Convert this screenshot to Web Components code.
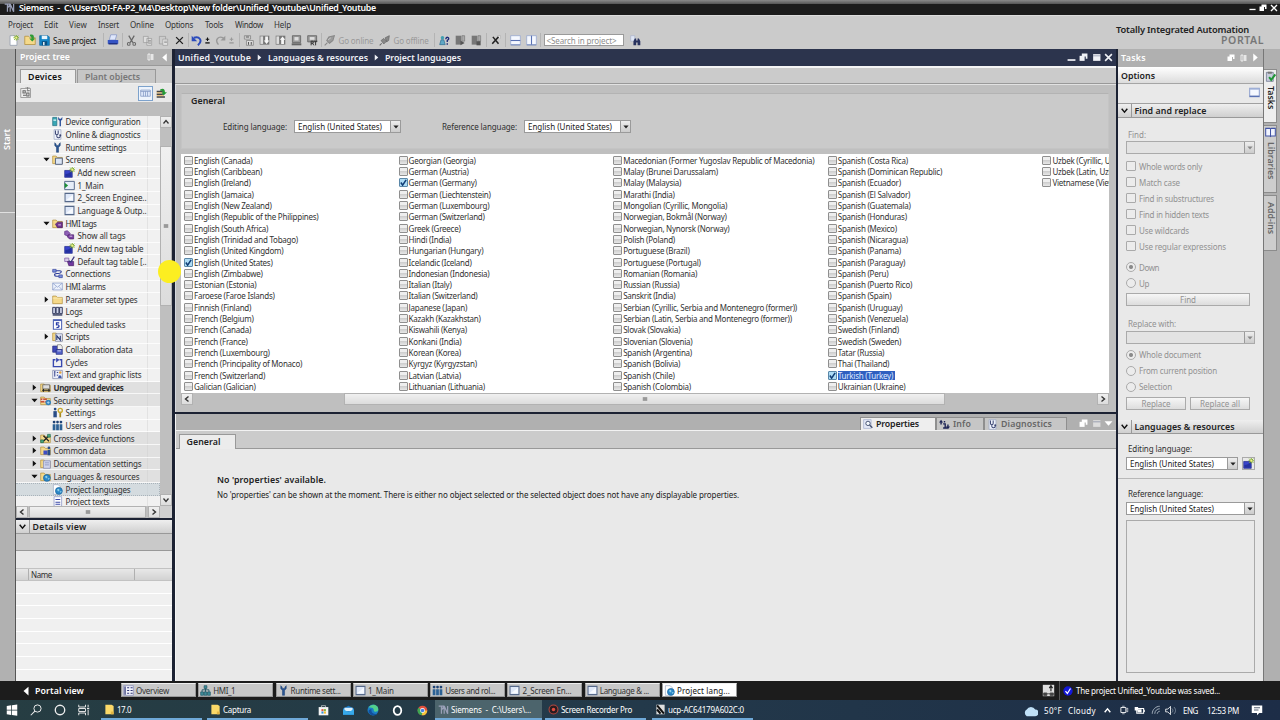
<!DOCTYPE html>
<html lang="en">
<head>
<meta charset="utf-8">
<title>TIA Portal</title>
<style>
  body {
    margin: 0;
    width: 1280px;
    height: 720px;
    overflow: hidden;
    font-family: "Noto Sans", "Open Sans", sans-serif;
    font-size: 8px;
    color: #303030;
    background: #cbcbcb;
  }
</style>
</head>
<body>
<tia-app></tia-app>

<script>
// Small icons, all on a 16x16 grid
const FOLDER = '<path d="M1 3h5l2 2h7v9H1z" fill="#f5d98a" stroke="#b18e3a"/>';
const PAGE = '<path d="M3 1h7l3 3v11H3z" fill="#fff" stroke="#8b94a8"/>';
const WRENCH = '<path d="M4 1v4l2.5 3v7h3V8L12 5V1l-2 2v2H6V3z" fill="#2a5592" stroke="#163a70" stroke-width=".7"/>';
const SPARK = '<path d="M12 0v8M8 4h8M9 1l6 6M15 1l-6 6" stroke="#7fae28" stroke-width="1.4"/><circle cx="12" cy="4" r="1.5" fill="#f3f08a"/>';
const GLOBE = '<circle cx="10" cy="10" r="5" fill="#2b87c8" stroke="#17659c"/><path d="M7 8l3-1 1 2-2 2zM11 11l3-1-1 3z" fill="#8fd0e8"/>';
const ICONS = {
  logo: '<path d="M1 3h8M5 3v11M5 9l4-6M9 14V3l5 11V3" fill="none" stroke="#9aa0b8" stroke-width="1.8"/>',
  newProject: PAGE + SPARK,
  open: FOLDER + '<path d="M8 1c4-1 6 1 5 5h2l-4 4-4-4h3c0-2-1-3-2-3z" fill="#2f9a35"/>',
  save: '<path d="M1 1h12l2 2v12H1z" fill="#1587c9" stroke="#0e649b"/><path d="M4 1h8v5H4z" fill="#e8f5fd"/><path d="M4 9h8v6H4z" fill="#0c4f80"/><path d="M6 10h2v5H6z" fill="#fff"/>',
  print: '<path d="M5 1h8l-2 7H3z" fill="#dfe7fb" stroke="#8596c5"/><path d="M1 8h14v5H1z" fill="#3554c4"/><path d="M2 12h12v2H2z" fill="#1f3186"/>',
  cut: '<path d="M4 1l6 10M12 1L6 11" stroke="#666" stroke-width="1.8"/><circle cx="4" cy="13" r="2" fill="none" stroke="#666" stroke-width="1.5"/><circle cx="12" cy="13" r="2" fill="none" stroke="#666" stroke-width="1.5"/>',
  copy: '<path d="M2 2h7v9H2zM7 5h7v10H7z" fill="#ddd" stroke="#999"/><path d="M9 8h4M9 10h4M9 12h4" stroke="#888"/>',
  paste: '<path d="M2 2h9v11H2z" fill="#ccc" stroke="#999"/><path d="M7 6h7v9H7z" fill="#e6e6e6" stroke="#999"/><path d="M9 9h4M9 11h4" stroke="#888"/>',
  del: '<path d="M2 2l12 12M14 2L2 14" stroke="#222" stroke-width="2.4"/>',
  undo: '<path d="M1 1v8h8z" fill="#2b4bbc"/><path d="M4 4c8-3 14 4 6 11" fill="none" stroke="#2b4bbc" stroke-width="2.8"/>',
  redo: '<path d="M15 1v7H8z" fill="#999"/><path d="M13 5C5 0-1 7 5 14" fill="none" stroke="#999" stroke-width="2"/>',
  more: '<path d="M8 1v8M4 5h8" stroke="currentColor" stroke-width="2.400"/><path d="M3 12h10v3H3z" fill="currentColor"/>',
  compile: '<path d="M2 1h9v5H2zM5 8h10v7H5z" fill="#ddd" stroke="#777"/><path d="M4 3h5M8 10v4M12 10v4" stroke="#555" stroke-width="1.5"/>',
  download: '<path d="M1 1h14v13H1z" fill="#777"/><path d="M2 2h4v11H2z" fill="#ddd"/><path d="M9 2h4v6h2l-4 5-4-5h2z" fill="#f7f7f7"/>',
  upload: '<path d="M1 1h14v13H1z" fill="#777"/><path d="M2 2h4v11H2z" fill="#ddd"/><path d="M9 13h4V7h2l-4-5-4 5h2z" fill="#f7f7f7"/>',
  device: '<path d="M2 1h12v10H2z" fill="#999" stroke="#555"/><path d="M5 3h6v5H5z" fill="#ddd"/><path d="M1 12h14v3H1z" fill="#666"/>',
  rt: '<path d="M1 1h13v9H1z" fill="#999" stroke="#555"/><path d="M4 3h7v4H4z" fill="#ddd"/><path d="M6 15V9h3v3H6M8 12l2 3M10 9h5M12.500 9v6" stroke="#333" stroke-width="1.4" fill="none"/>',
  goOnline: '<path d="M1 15l4-4" stroke="#888" stroke-width="1.500"/><path d="M4 8l3-5 8-2-2 7-5 4z" stroke="#888" fill="#9b9b9b" stroke-width="1.500"/><path d="M6 7l4-3" stroke="#ddd"/>',
  goOffline: '<path d="M1 15l3-3" stroke="#666" stroke-width="1.500"/><path d="M3 8l4-3 4 4-4 4zM9 4l6-3-1 7-3 2z" stroke="#666" fill="#888"/>',
  accessible: '<circle cx="5" cy="4" r="2.500" fill="#3f9fb0"/><path d="M1 14l2-7h4l2 7z" fill="#5fa7c5" stroke="#2d6c8f"/><path d="M10 6c0-4 5-3 4 0l-2 2v2M12 12v2" stroke="#1d2a78" stroke-width="2" fill="none"/>',
  start: '<path d="M1 1h8v13H1z" fill="#777"/><path d="M10 1h4v8h-4z" fill="#aaa" stroke="#777"/><path d="M8 8l6 3.500L8 15z" fill="#555"/>',
  stop: '<path d="M1 1h8v13H1z" fill="#777"/><path d="M10 1h4v8h-4z" fill="#aaa" stroke="#777"/><path d="M8 9h6v6H8z" fill="#555"/>',
  cross: '<path d="M10 1h5v5" fill="#eee" stroke="#aaa"/><path d="M3 3l9 11M12 3L2 14" stroke="#222" stroke-width="2.4"/>',
  splitH: '<path d="M1 1h14v13H1z" fill="#f5f8ff" stroke="#8ea0cd"/><path d="M1 8h14" stroke="#5971b3" stroke-width="1.6"/><path d="M1 14.500h14" stroke="#5971b3"/>',
  splitV: '<path d="M1 1h14v13H1z" fill="#f5f8ff" stroke="#8ea0cd"/><path d="M8 1v13" stroke="#5971b3" stroke-width="1.6"/><path d="M1 14.500h14" stroke="#5971b3"/>',
  window: '<path d="M1 2h14v12H1z" fill="#f5f8ff" stroke="#8ea0cd" stroke-width="1.500"/><path d="M1 13.500h14" stroke="#5971b3" stroke-width="2"/><path d="M1 3h14" stroke="#a9b8dc" stroke-width="2"/>',
  find: '<path d="M1 1h6v8H1z" fill="#dfe6f5" stroke="#a9b3cc"/><path d="M5 15V9l2-4h2v3h2V5h2l2 4v6h-4v-4H9v4z" fill="#27315f"/>',
  min: '<path d="M1 11h14v3H1z" fill="currentColor"/>',
  restore: '<path d="M5 1h10v9h-3V6H5z" fill="currentColor"/><path d="M1 5h9v9H1z" fill="currentColor"/>',
  max: '<path d="M2 2h13v12H2z" fill="currentColor"/><path d="M2 5h13" stroke="#66708c"/>',
  close: '<path d="M2 2l12 12M14 2L2 14" stroke="currentColor" stroke-width="2.800"/>',
  pin: '<path d="M2 2h4v12H2z" fill="none" stroke="currentColor" stroke-width="1.5"/><path d="M8 2h5v12H8z" fill="currentColor" opacity=".7"/>',
  left: '<path d="M12 1v14L4 8z" fill="currentColor"/>',
  right: '<path d="M4 1v14l8-7z" fill="currentColor"/>',
  down: '<path d="M1 4h14l-7 8z" fill="currentColor"/>',
  chevDown: '<path d="M3 5l5 6 5-6" fill="none" stroke="currentColor" stroke-width="2.500"/>',
  chevUp: '<path d="M3 11l5-6 5 6" fill="none" stroke="currentColor" stroke-width="2.500"/>',
  chevLeft: '<path d="M11 3L5 8l6 5" fill="none" stroke="currentColor" stroke-width="2.800"/>',
  chevRight: '<path d="M5 3l6 5-6 5" fill="none" stroke="currentColor" stroke-width="2.800"/>',
  grip: '<path d="M2 3h12v10H2z" fill="#999"/>',
  network: '<path d="M1 2h13v12H1z" fill="#eee" stroke="#888"/><path d="M4 5h3v3H4zM9 5h4M9 8h3v4H9zM4 11h4" fill="none" stroke="#666" stroke-width="1.4"/><path d="M7 0h6M10 0v4" stroke="#777"/>',
  grid: '<path d="M1 3h14v9H1z" fill="#dfe9fb" stroke="#7990be"/><path d="M1 5h14M5 5v7M8 5v7M11 5v7" stroke="#7990be"/>',
  exportIcon: '<path d="M1 5h9M1 9h9M1 13h12" stroke="#444" stroke-width="2.300"/><path d="M1 7h8M1 11h10" stroke="#e8a63a"/><path d="M6 2c5-2 7 0 7 4h3l-5 5-3-5h2c0-2-2-2-4-2z" fill="#259a35"/>',
  devconf: '<path d="M1 2h6v12H1z" fill="#39a7b5" stroke="#216e80"/><path d="M2 5h4v2H2z" fill="#d5f3f5"/><path d="M9 1v4l2 2v8h2V7l2-2V1l-2 3h-2z" fill="#2a4f9a"/>',
  diag: '<path d="M3 1h10v14H3z" fill="#eef2fb" stroke="#9ba7c4"/><path d="M5 2v4c0 3 4 3 4 0V2M7 8v2c0 4 5 3 5 0" fill="none" stroke="#3a4472" stroke-width="1.5"/><circle cx="12" cy="9" r="1.500" fill="#3a4472"/>',
  wrench: WRENCH,
  screens: FOLDER + '<path d="M5 6h10v9H5z" fill="#dce6f5" stroke="#53627f" stroke-width="1.4"/>',
  addNew: '<path d="M1 5h11v10H1z" fill="#3843c9" stroke="#222a8a"/><path d="M2 10c4 0 6-2 9-4v8H2z" fill="#2431a0"/>' + SPARK,
  screenStart: '<path d="M1 2h14v12H1z" fill="#e6edf8" stroke="#56698a" stroke-width="1.400"/><path d="M1 4l5 4-5 4z" fill="#1b8f32"/>',
  screen: '<path d="M1.500 2h13v12h-13z" fill="#dfe8f8" stroke="#56698a" stroke-width="1.500"/><path d="M3 12l10-8v8z" fill="#f7faff"/>',
  tagFolder: FOLDER + '<path d="M5 9l3-3h7v8H8z" fill="#70328f" stroke="#4b2067"/><path d="M9 10h4" stroke="#fff"/>',
  tags: '<path d="M1 2l4-1 4 4-3 4-5-2z" fill="#8e5fb5" stroke="#592a83"/><path d="M6 7h8v6H8l-3-3z" fill="#7b3fa4" stroke="#4c2169"/><path d="M8 9h4" stroke="#fff"/>',
  tagTable: '<path d="M1 3h6v5H1z" fill="#d8c9e8" stroke="#7853a0"/><path d="M5 8h9v6H7z" fill="#7138a0" stroke="#4c2169"/><path d="M7 7l3 2 5-8" fill="none" stroke="#3b3580" stroke-width="1.800"/>',
  conn: '<path d="M1 2h5v4H1zM10 10h5v4h-5z" fill="#7c8fd8" stroke="#3445a0"/><path d="M6 4h5c4 0 3 4-2 4H7c-5 0-4 4 0 4h3" fill="none" stroke="#2e3e9a" stroke-width="1.600"/>',
  mail: '<path d="M1 3h14v10H1z" fill="#eef3fc" stroke="#8498c8"/><path d="M1 3l7 6 7-6M1 13l5-5M15 13l-5-5" fill="none" stroke="#8498c8"/>',
  folder: FOLDER + '<path d="M1 6h14" stroke="#fff1bd"/>',
  logs: '<path d="M1 2h4v9H1zM6 2h4v9H6zM11 2h4v9h-4z" fill="#cdd3e8" stroke="#2b3358" stroke-width="1.3"/><path d="M1 13h14" stroke="#2b3358" stroke-width="2"/>',
  task: '<path d="M2 1h12v14H2z" fill="#fff" stroke="#4a60b4" stroke-width="1.5"/><path d="M2 2h12" stroke="#4a60b4" stroke-width="2"/><path d="M10.500 5.500H6.500v3c5-1 5 4 0 4" fill="none" stroke="#2439a5" stroke-width="1.800"/>',
  scripts: FOLDER + '<path d="M5 4h10v11H5z" fill="#e8ecf8" stroke="#6f7b9c"/><path d="M7 13V7l5 6V7" stroke="#26366f" stroke-width="1.6" fill="none"/>',
  collab: '<path d="M1 3h8v9H1z" fill="#3f48b8" stroke="#242b7d"/><path d="M8 1h5l2 3v4H8z" fill="#eee" stroke="#777"/><path d="M6 8h9v7H6z" fill="#5463c9" stroke="#242b7d"/><path d="M8 10h5" stroke="#fff"/>',
  cycles: '<path d="M5 4H2v10h12V4h-3" fill="none" stroke="#3949b0" stroke-width="2"/><path d="M6 1l5 3-5 4z" fill="#3949b0"/>',
  textList: '<path d="M1 2h14v12H1z" fill="#eceffa" stroke="#7780a8"/><path d="M4 4v7M3 4h2M7 5h2M7 9h2" stroke="#2e3a85" stroke-width="1.400"/><circle cx="12" cy="5" r="1.800" fill="#e3a23a"/><path d="M9 13c0-5 5-5 5 0z" fill="#3e58a8"/>',
  ungrouped: FOLDER + '<path d="M4 4h10v6H4z" fill="#ddd" stroke="#555"/><path d="M3 12h12M5 10v4M13 10v4" stroke="#222" stroke-width="1.600"/>',
  security: FOLDER + '<path d="M1 5h9v6H1z" fill="#c5503a"/><path d="M1 8h9M4 5v3M7 8v3" stroke="#fff"/><circle cx="12" cy="11" r="4" fill="#3382bd"/><path d="M10 11h4M12 9v4" stroke="#bde3f5"/>',
  userSet: '<circle cx="4.500" cy="3" r="2" fill="#294c86"/><path d="M2 6h5v9H2z" fill="#294c86"/><path d="M12 7v8" stroke="#a88a22" stroke-width="2.500"/><circle cx="12" cy="5" r="3" fill="none" stroke="#c9a92e" stroke-width="2"/>',
  users: '<circle cx="3" cy="3" r="2" fill="#1d4275"/><circle cx="8" cy="3" r="2" fill="#1d4275"/><circle cx="13" cy="3" r="2" fill="#1d4275"/><path d="M1 6h4v9H1zM6 6h4v9H6zM11 6h4v9h-4z" fill="#2c6194"/>',
  cross2: FOLDER + '<path d="M5 4l8 8M13 4l-8 8" stroke="#222" stroke-width="1.800"/><path d="M1 10h4v4H1zM11 2h4v4h-4z" fill="#4aa882" stroke="#206a4c"/>',
  common: FOLDER + '<path d="M5 8h6v6H5z" fill="#3d4dc4"/><circle cx="13" cy="4" r="2" fill="#294c86"/><path d="M11 7h4v8h-4z" fill="#294c86"/>',
  docset: FOLDER + '<path d="M5 4h10v11H5z" fill="#cfd4ec" stroke="#7d86b5"/><path d="M7 7h6M7 10h6" stroke="#7d86b5"/>',
  langFolder: FOLDER + GLOBE,
  lang: '<path d="M2 1h7l3 3v11H2z" fill="#fff" stroke="#9aa7c0"/>' + GLOBE,
  text: '<path d="M3 1h11v14H3z" fill="#fff" stroke="#7f8bc2"/><path d="M5 5h7M5 9h7M5 12h7" stroke="#3b4aa8" stroke-width="1.5"/>',
  magnify: '<path d="M1 1h12v14H1z" fill="#e3e8f6" stroke="#9aa6c8"/><circle cx="8" cy="7" r="3.500" fill="#f6fbff" stroke="#43506f" stroke-width="1.5"/><path d="M10.500 9.500L15 14" stroke="#43506f" stroke-width="2"/>',
  info: '<path d="M0 5l3-4 3 4H4v3H2V5zM10 11l3 4 3-4h-2V8h-2v3z" fill="#1c2354"/><path d="M6 7h3v6M6 13h6M8 3v2" stroke="#1c2354" stroke-width="2"/>',
  taskCheck: '<path d="M2 2h10v13H2z" fill="#c8cddd" stroke="#626b85"/><path d="M4 1h6v3H4z" fill="#777"/><path d="M6 9l3 4 6-8" fill="none" stroke="#1f9636" stroke-width="2.800"/>',
  book: '<path d="M1 2h6l1 1 1-1h6v11H9l-1 1-1-1H1z" fill="#f1f4ff" stroke="#4254a5" stroke-width="1.500"/><path d="M8 3v11" stroke="#4254a5" stroke-width="1.500"/>',
  overview: '<path d="M1 1h14v14H1z" fill="#f2f3fb" stroke="#8188b5"/><path d="M3 2v12M6 4h3M11 4h3M6 8h3M11 8h3M6 12h3M11 12h3" stroke="#2e3573" stroke-width="1.800"/>',
  hmi: '<path d="M6 1h4v4H6zM1 10h4v5H1zM6 10h4v5H6zM11 10h4v5h-4z" fill="#3e8d99" stroke="#1e5665"/><path d="M8 5v5M3 10V7h10v3" fill="none" stroke="#1e5665" stroke-width="1.300"/>',
  status: '<path d="M1 1h14v14H1z" fill="#ddd"/><path d="M2 11h4v3H2zM10 11h4v3h-4zM6 12h4" fill="#444" stroke="#444"/><path d="M11 2v7M9 5l2-3 2 3" stroke="#222" stroke-width="1.400" fill="none"/>',
  ok: '<circle cx="8" cy="8" r="7.500" fill="#1418d8"/><path d="M4 8l3 4 5-8" fill="none" stroke="#fff" stroke-width="2"/>',
  win: '<path d="M1 2.500l6-.8v6H1zM8 1.500L15 .6v7.100H8zM1 8.600h6v6l-6-.8zM8 8.600h7v7l-7-.9z" fill="#fff"/>',
  search: '<circle cx="10" cy="6" r="4.800" fill="none" stroke="#eee" stroke-width="1.300"/><path d="M6.500 9.500L1 15" stroke="#eee" stroke-width="1.400"/>',
  cortana: '<circle cx="8" cy="8" r="6.300" fill="none" stroke="#eee" stroke-width="1.800"/>',
  taskview: '<path d="M1 1v3h9V1M1 15v-3h9v3M1 6h9v4H1zM13.500 1v3M13.500 8v7" fill="none" stroke="#e6e6e6" stroke-width="1.300"/><path d="M12 5h3v2h-3z" fill="#e6e6e6"/>',
  winFolder: '<path d="M2 1h9l3 2v12H2z" fill="#fbd968"/><path d="M10 11h4v4h-4z" fill="#e3b544"/>',
  store: '<path d="M1 3h14v12H1z" fill="#f4f4f4"/><path d="M5 3V1h6v2" fill="none" stroke="#ddd"/><path d="M5 6h3v3H5z" fill="#e5533c"/><path d="M8.500 6h3v3h-3z" fill="#7bb83c"/><path d="M5 9.500h3v3H5z" fill="#2f93dd"/><path d="M8.500 9.500h3v3h-3z" fill="#f4b92c"/>',
  winMail: '<path d="M0 5l8-4 8 4v9H0z" fill="#1476c4"/><path d="M2 4h12v5H2z" fill="#d9effc"/><path d="M0 6l8 4 8-4v8H0z" fill="#37a9ea"/>',
  edge: '<circle cx="8" cy="8" r="7.300" fill="#1b7ec6"/><path d="M2 5c3-6 13-5 13 2 0 4-5 4-6 2 1-4-4-5-7-4z" fill="#51cf8c"/><path d="M6 7c-1 6 4 7 8 6-4 4-12 2-12-4 1-2 3-2 4-2z" fill="#12509d"/>',
  opera: '<ellipse cx="8" cy="8" rx="5.500" ry="6.300" fill="none" stroke="#fff" stroke-width="2.600"/>',
  chrome: '<circle cx="8" cy="8" r="7" fill="#e0503e"/><path d="M8 8L2 4a7 7 0 0 0 5 11z" fill="#3ea653"/><path d="M8 8h7a7 7 0 0 1-8 7z" fill="#f4c63c"/><circle cx="8" cy="8" r="3.500" fill="#fff"/><circle cx="8" cy="8" r="2.600" fill="#447fe0"/>',
  rec: '<circle cx="8" cy="8" r="6.500" fill="#2a1c20" stroke="#b5483f" stroke-width="1.500"/><circle cx="8" cy="8" r="2.500" fill="#df4c3f"/>',
  ucp: '<path d="M2 1h12v14H2z" fill="#ddd"/><path d="M3 2l10 12M3 8l5 6" stroke="#111" stroke-width="3"/>',
  cloud: '<path d="M4 14a4 4 0 0 1 0-7 5 5 0 0 1 9 0 3.500 3.500 0 0 1 0 7z" fill="#bfe0f7"/>',
  cam: '<path d="M3 4h8v8H3z" fill="none" stroke="#fff" stroke-width="1.400"/><path d="M11 7l3-2v6l-3-2M5 2h4M5 14h4" stroke="#fff" fill="none"/>',
  battery: '<path d="M4 5h10v7H4zM15 7v3" fill="none" stroke="#fff" stroke-width="1.500"/><path d="M5 6h6v5H5zM1 3h5v5H1z" fill="#fff"/>',
  wifi: '<path d="M2 14C2 7 8 2 14 2M6 14c0-5 4-8 8-8M10 14c0-2 2-4 4-4" fill="none" stroke="#bcc6d0" stroke-width="1.300"/>',
  sound: '<path d="M1 6h3l4-4v12l-4-4H1z" fill="none" stroke="#fff" stroke-width="1.200"/><path d="M10 5c2 2 2 4 0 6M13 3c3 3 3 7 0 10" fill="none" stroke="#8b98a8" stroke-width="1.200"/>',
  notify: '<path d="M1 2h14v10h-4l-3 3v-3H1z" fill="#fff"/><path d="M4 5h8M4 8h6" stroke="#1f2f45"/>'
};

class TiaElement extends HTMLElement {
  connectedCallback() {
    if (this.shadowRoot) return;
    this.attachShadow({ mode: 'open' });
    this.shadowRoot.innerHTML = `<style>* { box-sizing: border-box; } ${this.css()}</style>${this.html()}`;
    this.ready();
  }

  css() { return ''; }
  html() { return '<slot></slot>'; }
  ready() {}
}

const icon = (name, size = 11, color = '') =>
  `<tia-icon name="${name}" size="${size}"${color ? ` style="color:${color}"` : ''}></tia-icon>`;
const fit = (text, width, style = '') =>
  `<fit-text w="${width}" style="${style}">${text.replace(/&/g, '&amp;').replace(/</g, '&lt;')}</fit-text>`;
const gap = (width) => `<i style="flex:none;width:${width}px"></i>`;

class TiaIcon extends TiaElement {
  css() {
    const size = this.getAttribute('size');
    return `:host { display: block; flex: none; width: ${size}px; height: ${size}px; } svg { display: block; }`;
  }

  html() {
    const size = this.getAttribute('size');
    return `<svg width="${size}" height="${size}" viewBox="0 0 16 16" fill="none">${ICONS[this.getAttribute('name')]}</svg>`;
  }
}
customElements.define('tia-icon', TiaIcon);

// Single line label that tracks its letters to fill the given width
class FitText extends TiaElement {
  css() {
    return `:host { display: block; flex: none; white-space: pre; width: ${this.getAttribute('w')}px; } span { display: inline-block; }`;
  }

  html() { return `<span><slot></slot></span>`; }

  ready() {
    const span = this.shadowRoot.querySelector('span');
    const width = span.getBoundingClientRect().width;
    if (!width) return;
    const spacing = (Number(this.getAttribute('w')) - width) / this.textContent.length;
    span.style.letterSpacing = `${spacing.toFixed(3)}px`;
  }
}
customElements.define('fit-text', FitText);

class TitleBar extends TiaElement {
  css() {
    return `
      :host { display: flex; align-items: center; height: 15px; padding: 0 2px 0 4px; color: #fff;
        background: linear-gradient(#8a8a8a, #555 4px, #1c1c1c 4px); font-size: 8.800px; font-weight: 600; box-sizing: border-box; }
    `;
  }

  html() {
    return `${icon('logo', 11)}${gap(4)}${fit('Siemens  -  C:\\Users\\DI-FA-P2_M4\\Desktop\\New folder\\Unified_Youtube\\Unified_Youtube', 357)}
      <i style="flex:1"></i>${icon('min', 7)}${gap(3)}${icon('restore', 8)}${gap(3)}${icon('close', 8)}`;
  }
}
customElements.define('title-bar', TitleBar);

class AppHeader extends TiaElement {
  css() {
    return `
      :host { display: flex; justify-content: space-between; height: 34px; background: #cbcbcb; border-top: 1px solid #ddd; box-sizing: border-box; }
      .menu, .tools { display: flex; align-items: center; }
      .menu { height: 16px; padding-left: 8px; color: #333; }
      .tools { height: 16px; padding-left: 8px; }
      .sep { flex: none; width: 1px; height: 14px; background: #b4b4b4; }
      .search { display: flex; align-items: center; width: 80px; height: 12px; background: #fff; border: 1px solid #9a9a9a; padding-left: 2px; color: #8d8d8d; }
      .brand { display: flex; flex-direction: column; align-items: flex-end; padding: 9px 16px 0 0; font-weight: 600; }
      .brand fit-text { line-height: 10px; }
    `;
  }

  html() {
    const sep = '<b class="sep"></b>';
    return `
      <div>
        <div class="menu">
          ${fit('Project', 25)}${gap(11)}${fit('Edit', 14)}${gap(11)}${fit('View', 18)}${gap(11)}${fit('Insert', 21)}${gap(11)}
          ${fit('Online', 24)}${gap(11)}${fit('Options', 28)}${gap(12)}${fit('Tools', 18)}${gap(12)}${fit('Window', 28)}${gap(11)}${fit('Help', 17)}
        </div>
        <div class="tools">
          ${icon('newProject')}${gap(4.500)}${icon('open', 12)}${gap(3.500)}${icon('save')}${gap(3)}${fit('Save project', 43, 'color:#111')}
          ${gap(7)}${sep}${gap(3)}${icon('print', 12)}${gap(3)}${sep}${gap(3)}
          ${icon('cut')}${gap(5)}${icon('copy')}${gap(5)}${icon('paste')}${gap(6)}${icon('del', 9)}${gap(4)}${sep}${gap(2)}
          ${icon('undo', 11)}${gap(2)}${icon('more', 7, '#111')}${gap(4)}${icon('redo')}${gap(2)}${icon('more', 7, '#999')}${gap(3.500)}${sep}${gap(3)}
          ${icon('compile')}${gap(5)}${icon('download')}${gap(5)}${icon('upload')}${gap(5)}${icon('device')}${gap(5)}${icon('rt')}${gap(3)}${sep}${gap(2)}
          ${icon('goOnline')}${gap(4)}${fit('Go online', 35, 'color:#999')}${gap(5)}${icon('goOffline')}${gap(4)}${fit('Go offline', 35, 'color:#999')}
          ${gap(5)}${sep}${gap(4)}${icon('accessible')}${gap(5)}${icon('start')}${gap(5)}${icon('stop')}${gap(4)}${sep}${gap(4)}
          ${icon('cross', 10)}${gap(4)}${sep}${gap(4)}${icon('splitH')}${gap(5)}${icon('splitV')}${gap(3)}${sep}${gap(3)}
          <div class="search">${fit('<Search in project>', 70)}</div>${gap(6)}${icon('find')}
        </div>
      </div>
      <div class="brand">
        <div style="padding-right:15px">${fit('Totally Integrated Automation', 133, 'font-size:9.3px;color:#222')}</div>
        ${fit('PORTAL', 43, 'font-size:10.5px;color:#777')}
      </div>`;
  }
}
customElements.define('app-header', AppHeader);

class ScrollBar extends TiaElement {
  css() {
    const vertical = this.hasAttribute('vertical');
    return `
      :host { display: flex; flex-direction: ${vertical ? 'column' : 'row'}; flex: none; background: #bfbfbf; color: #333;
        ${vertical ? 'width: 12px' : 'height: 12px'}; }
      .btn, .thumb { display: flex; align-items: center; justify-content: center; flex: none; border: 1px solid #b2b2b2; background: linear-gradient(#f0f0f0, #dcdcdc); }
      .btn { width: 12px; height: 12px; }
    `;
  }

  html() {
    const vertical = this.hasAttribute('vertical');
    const side = vertical ? 'height' : 'width';
    return `<div class="btn">${icon(vertical ? 'chevUp' : 'chevLeft', 8)}</div>
      <i style="flex:none;${side}:${this.getAttribute('start')}px"></i>
      <div class="thumb" style="${side}:${this.getAttribute('thumb')}px">${icon('grip', 6)}</div>
      <i style="flex:1"></i><div class="btn">${icon(vertical ? 'chevDown' : 'chevRight', 8)}</div>`;
  }
}
customElements.define('scroll-bar', ScrollBar);

// level, arrow, icon, text, width
const TREE = [
  [2, '', 'devconf', 'Device configuration', 75],
  [2, '', 'diag', 'Online & diagnostics', 75],
  [2, '', 'wrench', 'Runtime settings', 61],
  [2, 'down', 'screens', 'Screens', 29],
  [3, '', 'addNew', 'Add new screen', 58],
  [3, '', 'screenStart', '1_Main', 26],
  [3, '', 'screen', '2_Screen Enginee..', 69],
  [3, '', 'screen', 'Language & Outp..', 69],
  [2, 'down', 'tagFolder', 'HMI tags', 31],
  [3, '', 'tags', 'Show all tags', 48],
  [3, '', 'addNew', 'Add new tag table', 66],
  [3, '', 'tagTable', 'Default tag table [..', 69],
  [2, '', 'conn', 'Connections', 45],
  [2, '', 'mail', 'HMI alarms', 40],
  [2, 'right', 'folder', 'Parameter set types', 72],
  [2, '', 'logs', 'Logs', 17],
  [2, '', 'task', 'Scheduled tasks', 60],
  [2, 'right', 'scripts', 'Scripts', 24],
  [2, '', 'collab', 'Collaboration data', 67],
  [2, '', 'cycles', 'Cycles', 22],
  [2, '', 'textList', 'Text and graphic lists', 76],
  [1, 'right', 'ungrouped', 'Ungrouped devices', 70],
  [1, 'down', 'security', 'Security settings', 60],
  [2, '', 'userSet', 'Settings', 30],
  [2, '', 'users', 'Users and roles', 56],
  [1, 'right', 'cross2', 'Cross-device functions', 81],
  [1, 'right', 'common', 'Common data', 52],
  [1, 'right', 'docset', 'Documentation settings', 88],
  [1, 'down', 'langFolder', 'Languages & resources', 86],
  [2, '', 'lang', 'Project languages', 65],
  [2, '', 'text', 'Project texts', 44]
];

class TreeView extends TiaElement {
  css() {
    return `
      :host { display: grid; grid-template-columns: 1fr 12px; grid-template-rows: 390px 12px; background: #d0d0d0; }
      .rows { overflow: hidden; background: linear-gradient(90deg, transparent 131px, #e2e2e2 131px, #e2e2e2 132px, transparent 132px) #f1f1f1; }
      .row { display: flex; align-items: center; height: 12.667px; border-bottom: 1px solid rgba(255, 255, 255, .75); line-height: 11px; }
      .l1 { padding-left: 14px; background: rgba(205, 205, 205, .45); }
      .l2 { padding-left: 26px; }
      .l3 { padding-left: 38px; }
      .arrow { width: 10px; padding-left: 1px; color: #111; }
      .sel { background: rgba(196, 207, 214, .65); border: 1px dotted #a9b3ba; border-left: 0; }
      .bold { font-weight: 700; }
    `;
  }

  html() {
    const rows = TREE.map(([level, arrow, name, text, width]) => {
      const cls = text === 'Project languages' ? ' sel' : text === 'Ungrouped devices' ? ' bold' : '';
      return `<div class="row l${level}${cls}"><div class="arrow">${arrow ? icon(arrow, 7) : ''}</div>
        ${icon(name, 11)}${gap(2.500)}${fit(text, width)}</div>`;
    }).join('');
    return `<div class="rows">${rows}</div><scroll-bar vertical start="18" thumb="160"></scroll-bar>
      <scroll-bar start="1" thumb="117"></scroll-bar>`;
  }
}
customElements.define('tree-view', TreeView);

class SectionHeader extends TiaElement {
  css() {
    return `
      :host { display: flex; align-items: center; flex: none; box-sizing: border-box; height: 14px; border-bottom: 1px solid #999; background: linear-gradient(#efefef, #cfcfcf); font-size: 8.800px; font-weight: 600; color: #222; }
      div { display: flex; align-items: center; justify-content: center; width: 14px; height: 100%; border-right: 1px solid #999; margin-right: 2.500px; }
    `;
  }

  html() { return `<div>${icon('chevDown', 9, '#111')}</div><slot></slot>`; }
}
customElements.define('section-header', SectionHeader);

class ProjectTree extends TiaElement {
  css() {
    return `
      :host { display: flex; flex-direction: column; background: #bdbdbd; overflow: hidden; }
      .head, .tabs, .tools, .name { display: flex; align-items: center; flex: none; }
      .head { height: 17px; padding: 0 3px 0 4px; background: #b0b0b0; color: #fff; font-weight: 600; font-size: 8.800px; border-bottom: 1px solid #999; }
      .tabs { height: 18px; align-items: flex-end; padding-left: 4px; background: #cbcbcb; font-size: 8.800px; font-weight: 600; border-bottom: 1px solid #eee; }
      .tab { display: flex; align-items: center; justify-content: center; height: 14px; border: 1px solid #999; border-bottom: 0; }
      .on { width: 56px; padding-right: 6px; background: #ececec; }
      .off { width: 79px; padding-right: 8px; background: #c6c6c6; }
      .tools { height: 18px; padding: 0 5px 0 4px; background: #e9e9e9; }
      .grid { border: 1px solid #7da2cc; background: #eef4fd; padding: 1px; margin-right: 3px; }
      tree-view { margin-top: 14px; flex: none; }
      .gap { flex: none; height: 2px; background: #1c2233; }
      .bar { flex: none; height: 17px; background: #c9c9c9; border-bottom: 1px solid #999; }
      .blank { flex: none; height: 17px; background: #e9e9e9; }
      .name { height: 13px; background: linear-gradient(#e8e8e8, #d2d2d2); border: 1px solid #c2c2c2; border-width: 1px 0; }
      .name div { display: flex; align-items: center; height: 100%; border-right: 1px solid #b0b0b0; }
      .lines { flex: 1; background: repeating-linear-gradient(#f0f0f0 0 11.600px, #fff 11.600px 12.667px); }
    `;
  }

  html() {
    return `
      <div class="head">${fit('Project tree', 50)}<i style="flex:1"></i>${icon('pin', 8)}${gap(5)}${icon('left', 9)}</div>
      <div class="tabs">
        <div class="tab on">${fit('Devices', 34, 'color:#111')}</div>${gap(1)}
        <div class="tab off">${fit('Plant objects', 55, 'color:#777')}</div>
      </div>
      <div class="tools">${icon('network', 12)}<i style="flex:1"></i><div class="grid">${icon('grid', 11)}</div>${icon('exportIcon', 11)}</div>
      <tree-view></tree-view>
      <div class="gap"></div>
      <section-header>${fit('Details view', 54)}</section-header>
      <div class="bar"></div><div class="blank"></div>
      <div class="name"><div style="width:13px"></div><div style="width:106px;padding-left:2px">${fit('Name', 21)}</div></div>
      <div class="lines"></div>`;
  }
}
customElements.define('project-tree', ProjectTree);

class SelectBox extends TiaElement {
  css() {
    return `
      :host { display: flex; justify-content: space-between; align-items: center; height: 13px; border: 1px solid #9a9a9a; background: #fff; padding-left: 3px; box-sizing: border-box; color: #222; line-height: 10px; }
      :host([disabled]) { background: #e3e3e3; color: #888; border-color: #aaa; }
      .btn { display: flex; align-items: center; justify-content: center; width: 10px; height: 100%; border-left: 1px solid #9a9a9a; background: linear-gradient(#eee, #ccc); }
    `;
  }

  html() { return `<slot></slot><i></i><div class="btn">${icon('down', 6)}</div>`; }
}
customElements.define('select-box', SelectBox);

const LANGS = [
  ['English (Canada)', 'English (Caribbean)', 'English (Ireland)', 'English (Jamaica)', 'English (New Zealand)', 'English (Republic of the Philippines)', 'English (South Africa)', 'English (Trinidad and Tobago)', 'English (United Kingdom)', '*English (United States)', 'English (Zimbabwe)', 'Estonian (Estonia)', 'Faroese (Faroe Islands)', 'Finnish (Finland)', 'French (Belgium)', 'French (Canada)', 'French (France)', 'French (Luxembourg)', 'French (Principality of Monaco)', 'French (Switzerland)', 'Galician (Galician)'],
  ['Georgian (Georgia)', 'German (Austria)', '*German (Germany)', 'German (Liechtenstein)', 'German (Luxembourg)', 'German (Switzerland)', 'Greek (Greece)', 'Hindi (India)', 'Hungarian (Hungary)', 'Icelandic (Iceland)', 'Indonesian (Indonesia)', 'Italian (Italy)', 'Italian (Switzerland)', 'Japanese (Japan)', 'Kazakh (Kazakhstan)', 'Kiswahili (Kenya)', 'Konkani (India)', 'Korean (Korea)', 'Kyrgyz (Kyrgyzstan)', 'Latvian (Latvia)', 'Lithuanian (Lithuania)'],
  ['Macedonian (Former Yugoslav Republic of Macedonia)', 'Malay (Brunei Darussalam)', 'Malay (Malaysia)', 'Marathi (India)', 'Mongolian (Cyrillic, Mongolia)', 'Norwegian, Bokmål (Norway)', 'Norwegian, Nynorsk (Norway)', 'Polish (Poland)', 'Portuguese (Brazil)', 'Portuguese (Portugal)', 'Romanian (Romania)', 'Russian (Russia)', 'Sanskrit (India)', 'Serbian (Cyrillic, Serbia and Montenegro (former))', 'Serbian (Latin, Serbia and Montenegro (former))', 'Slovak (Slovakia)', 'Slovenian (Slovenia)', 'Spanish (Argentina)', 'Spanish (Bolivia)', 'Spanish (Chile)', 'Spanish (Colombia)'],
  ['Spanish (Costa Rica)', 'Spanish (Dominican Republic)', 'Spanish (Ecuador)', 'Spanish (El Salvador)', 'Spanish (Guatemala)', 'Spanish (Honduras)', 'Spanish (Mexico)', 'Spanish (Nicaragua)', 'Spanish (Panama)', 'Spanish (Paraguay)', 'Spanish (Peru)', 'Spanish (Puerto Rico)', 'Spanish (Spain)', 'Spanish (Uruguay)', 'Spanish (Venezuela)', 'Swedish (Finland)', 'Swedish (Sweden)', 'Tatar (Russia)', 'Thai (Thailand)', '*Turkish (Turkey)', 'Ukrainian (Ukraine)'],
  ['Uzbek (Cyrillic, Uzbekistan)', 'Uzbek (Latin, Uzbekistan)', 'Vietnamese (Vietnam)']
];

class LanguageList extends TiaElement {
  css() {
    return `
      :host { display: flex; height: 239px; padding: .4px 0 0 3px; background: #fff; overflow: hidden; box-sizing: border-box; }
      .col { flex: none; width: 214.600px; }
      .row { display: flex; align-items: center; height: 11.330px; white-space: nowrap; letter-spacing: -.25px; line-height: 9px; color: #333; }
      .box { flex: none; width: 9px; height: 9px; margin-right: 1px; border: 1px solid #8f8f8f; border-radius: 1px; background: linear-gradient(#eee 45%, #ccc 45%, #e8e8e8); }
      .box.on { border-color: #5a87a8; background: #aedcf5; color: #123f77; }
      .box svg { display: block; }
      .hot { background: #2f5fc0; color: #dfe9ff; padding-right: 2px; }
    `;
  }

  html() {
    const tick = '<svg width="7" height="7" viewBox="0 0 8 8"><path d="M1 4l2 3 4-6" fill="none" stroke="currentColor" stroke-width="1.800"/></svg>';
    return LANGS.map((col) => `<div class="col">${col.map((item) => {
      const on = item[0] === '*';
      const text = on ? item.slice(1) : item;
      return `<div class="row"><div class="box${on ? ' on' : ''}">${on ? tick : ''}</div><span class="${text === 'Turkish (Turkey)' ? 'hot' : ''}">${text}</span></div>`;
    }).join('')}</div>`).join('');
  }
}
customElements.define('language-list', LanguageList);

class LanguageEditor extends TiaElement {
  css() {
    return `
      :host { display: block; height: 363px; background: #bfbfbf; }
      .head { display: flex; align-items: center; height: 17px; padding: 0 2px 0 3px; background: #2c344d; color: #f0f2f7; font-size: 8.800px; font-weight: 600; }
      .bar { height: 18px; border-top: 2px solid #f5f5f5; border-bottom: 1px solid #999; background: #cbcbcb; }
      .body { padding: 8px 7px 7px 5px; border-top: 1px solid #e2e2e2; border-left: 1px solid #d5d8de; }
      .general { height: 56px; margin-bottom: 5px; background: #cacaca; border: 1px solid #c4c4c4; border-top-color: #b3b3b3; padding: 1px 0 0 9px; }
      .fields { display: flex; align-items: center; padding: 13px 0 0 32px; }
    `;
  }

  html() {
    const arrow = gap(5) + icon('right', 7) + gap(5);
    return `
      <div class="head">${fit('Unified_Youtube', 73)}${arrow}${fit('Languages & resources', 100)}${arrow}${fit('Project languages', 76)}
        <i style="flex:1"></i>${icon('min', 9)}${gap(3)}${icon('restore', 9)}${gap(4)}${icon('max', 9)}${gap(3)}${icon('close', 9)}${gap(1)}</div>
      <div class="bar"></div>
      <div class="body">
        <div class="general">
          ${fit('General', 34, 'font-size:8.800px;font-weight:600;color:#222;line-height:12px')}
          <div class="fields">
            ${fit('Editing language:', 64)}${gap(7)}<select-box style="width:107px">${fit('English (United States)', 84)}</select-box>${gap(41)}
            ${fit('Reference language:', 75)}${gap(7)}<select-box style="width:107px">${fit('English (United States)', 84)}</select-box>
          </div>
        </div>
        <language-list></language-list>
        <scroll-bar start="151" thumb="601"></scroll-bar>
      </div>`;
  }
}
customElements.define('language-editor', LanguageEditor);

class InspectorPanel extends TiaElement {
  css() {
    return `
      :host { display: flex; flex-direction: column; flex: 1; background: #e9e9e9; border-left: 1px solid #f5f5f5; font-weight: 600; font-size: 8.800px; }
      .head { display: flex; align-items: flex-end; height: 17px; padding-right: 3px; background: #b0b0b0; border-bottom: 1px solid #f2f2f2; color: #fff; }
      .tab { display: flex; align-items: center; height: 13px; border: 1px solid #8f8f8f; border-bottom: 0; background: #c6c6c6; color: #666; padding-left: 2px; }
      .tab.on { background: #eee; color: #222; }
      .wins { display: flex; align-items: center; height: 14px; }
      .sub { display: flex; align-items: flex-end; height: 18px; padding-left: 3px; background: #cbcbcb; border-bottom: 1px solid #999; }
      .general { height: 15px; margin-bottom: -1px; width: 57px; padding: 0 8px 1px 0; display: flex; align-items: center; justify-content: center; border: 1px solid #999; border-bottom: 0; background: #ececec; color: #222; }
      .msg { padding: 25px 0 0 41px; line-height: 12px; color: #222; }
    `;
  }

  html() {
    return `
      <div class="head"><i style="flex:1"></i>
        <div class="tab on" style="width:76px">${icon('magnify', 10)}${gap(3)}${fit('Properties', 43)}</div>
        <div class="tab" style="width:48px">${icon('info', 11)}${gap(3)}${fit('Info', 18)}</div>
        <div class="tab" style="width:83px">${icon('diag', 11)}${gap(3)}${fit('Diagnostics', 51)}</div>${gap(12)}
        <div class="wins">${icon('restore', 9)}${gap(4)}${icon('max', 9, '#ddd')}${gap(3)}${icon('down', 9)}</div>
      </div>
      <div class="sub"><div class="general">${fit('General', 34)}</div></div>
      <div class="msg">${fit("No 'properties' available.", 109)}
        <div style="height:3px"></div>
        ${fit("No 'properties' can be shown at the moment. There is either no object selected or the selected object does not have any displayable properties.", 522, 'font-weight:400;font-size:8px')}</div>`;
  }
}
customElements.define('inspector-panel', InspectorPanel);

class CheckOption extends TiaElement {
  css() {
    return `
      :host { display: flex; align-items: center; height: 16px; color: #929292; }
      i { width: 10px; height: 10px; margin-right: 3px; border: 1px solid #aaa; background: #ececec; border-radius: 1px; }
      :host([radio]) i { border-radius: 50%; }
      :host([on]) i { background: radial-gradient(#8a8a8a 1.500px, #ececec 2.500px); }
    `;
  }

  html() { return '<i></i><slot></slot>'; }
}
customElements.define('check-option', CheckOption);

class TasksPanel extends TiaElement {
  css() {
    return `
      :host { display: flex; flex-direction: column; background: #e9e9e9; overflow: hidden; }
      .head { display: flex; align-items: center; height: 18px; padding: 0 3px 1px; background: #b0b0b0; color: #fff; font-size: 8.800px; font-weight: 600; }
      .opts { display: flex; align-items: center; height: 17px; padding: 1px 0 0 3px; background: linear-gradient(#fff, #dcdcdc); border-bottom: 1px solid #a5a5a5; font-size: 8.800px; font-weight: 600; color: #222; }
      .tools { display: flex; align-items: center; justify-content: flex-end; height: 20px; padding: 0 3px 2px 0; border-bottom: 1px solid #a0a0a0; }
      .find, .langs { padding: 0 8px; }
      .find { height: 302px; flex: none; padding-top: 10px; color: #929292; }
      .label { padding-left: 2px; height: 13px; line-height: 13px; }
      .btns { display: flex; gap: 4px; width: 124px; }
      .btn { flex: 1; display: flex; align-items: center; justify-content: center; height: 13px; border: 1px solid #aaa; background: linear-gradient(#f6f6f6, #ddd); }
      .rule { height: 1px; background: #b8b8b8; margin: 8px -8px; }
      .line { display: flex; gap: 4px; }
      .add { display: flex; align-items: center; justify-content: center; width: 13px; height: 13px; border: 1px solid #aaa; }
      .box { height: 153px; border: 1px solid #aaa; margin-top: 5px; }
    `;
  }

  html() {
    const opt = (text, width, attrs = '') => `<check-option ${attrs}>${fit(text, width)}</check-option>`;
    return `
      <div class="head">${fit('Tasks', 25)}<i style="flex:1"></i>${icon('restore', 8)}${gap(5)}${icon('pin', 8)}${gap(3)}${icon('right', 9)}</div>
      <div class="opts">${fit('Options', 34)}</div>
      <div class="tools">${icon('window', 11)}</div>
      <section-header>${fit('Find and replace', 72)}</section-header>
      <div class="find">
        <div class="label">${fit('Find:', 18)}</div>
        <select-box disabled></select-box>
        <div style="height:4px"></div>
        ${opt('Whole words only', 63)}${opt('Match case', 41)}${opt('Find in substructures', 75)}${opt('Find in hidden texts', 70)}${opt('Use wildcards', 50)}${opt('Use regular expressions', 87)}
        <div style="height:5px"></div>
        ${opt('Down', 20, 'radio on')}${opt('Up', 10, 'radio')}
        <div style="height:2px"></div>
        <div class="btns"><div class="btn">${fit('Find', 16)}</div></div>
        <div style="height:11px"></div>
        <div class="label">${fit('Replace with:', 48)}</div>
        <div style="height:1px"></div>
        <select-box disabled></select-box>
        <div style="height:2.500px"></div>
        ${opt('Whole document', 62, 'radio on')}${opt('From current position', 78, 'radio')}${opt('Selection', 33, 'radio')}
        <div style="height:2px"></div>
        <div class="btns"><div class="btn">${fit('Replace', 29)}</div><div class="btn">${fit('Replace all', 40)}</div></div>
      </div>
      <section-header>${fit('Languages & resources', 100)}</section-header>
      <div class="langs">
        <div style="height:8px"></div>
        <div class="label">${fit('Editing language:', 64)}</div><div style="height:2px"></div>
        <div class="line"><select-box style="width:112px">${fit('English (United States)', 84)}</select-box><div class="add">${icon('addNew', 11)}</div></div>
        <div class="rule"></div>
        <div class="label">${fit('Reference language:', 75)}</div><div style="height:2px"></div>
        <select-box>${fit('English (United States)', 84)}</select-box>
        <div class="box"></div>
      </div>`;
  }
}
customElements.define('tasks-panel', TasksPanel);

class SideTabs extends TiaElement {
  css() {
    return `
      :host { display: block; background: #b0b0b0; border-left: 1px solid #777; }
      .tab { display: flex; flex-direction: column; align-items: center; gap: 4px; width: 13px; margin-bottom: 2px; padding-top: 1px; border: 1px solid #8c8c8c; border-left: 0; background: #cdcdcd; color: #666; font-size: 8.800px; font-weight: 600; overflow: hidden; }
      .tab > div { writing-mode: vertical-rl; line-height: 11px; white-space: nowrap; }
      .on { background: #eee; color: #222; }
    `;
  }

  html() {
    return `
      <div style="height:20px"></div>
      <div class="tab on" style="height:54px">${icon('taskCheck', 11)}<div>Tasks</div></div>
      <div class="tab" style="height:68px">${icon('book', 11)}<div>Libraries</div></div>
      <div class="tab" style="height:56px;padding-top:6px"><div>Add-ins</div></div>`;
  }
}
customElements.define('side-tabs', SideTabs);

class StartStrip extends TiaElement {
  css() {
    return `
      :host { display: block; background: #aaa; border-right: 1px solid #555; }
      .top { display: flex; align-items: flex-end; justify-content: center; height: 164px; border-bottom: 1px solid #e0e0e0; background: #a9a9a9; }
      .top div { writing-mode: vertical-rl; transform: rotate(180deg); font-size: 8.800px; font-weight: 600; color: #fff; line-height: 13px; margin-bottom: 62px; }
      .rest { height: 468px; background: #b1b1b1; }
    `;
  }

  html() { return '<div class="top"><div>Start</div></div><div class="rest"></div>'; }
}
customElements.define('start-strip', StartStrip);

class PortalBar extends TiaElement {
  css() {
    return `
      :host { display: flex; align-items: center; height: 19px; background: #1c1c1c; color: #fff; }
      .tabs { display: flex; gap: 2.300px; height: 14px; margin-bottom: 1px; }
      .tab { display: flex; align-items: center; width: 75px; background: #c8c8c8; border: 1px solid #999; border-top-color: #eee; padding-left: 1px; color: #333; }
      .on { background: #fff; color: #111; }
      .div { width: 1px; height: 100%; background: #555; margin: 0 3px 0 4px; }
    `;
  }

  html() {
    const tabs = [['overview', 'Overview', 33], ['hmi', 'HMI_1', 22], ['wrench', 'Runtime sett...', 50], ['screen', '1_Main', 26], ['users', 'Users and rol...', 50], ['screen', '2_Screen En...', 49], ['screen', 'Language & ...', 49], ['lang', 'Project lang...', 53]];
    return `${gap(21)}${icon('left', 10)}${gap(4)}${fit('Portal view', 49, 'font-size:8.800px;font-weight:600')}${gap(37)}
      <div class="tabs">${tabs.map(([name, text, width], i) => `<div class="tab${i === 7 ? ' on' : ''}">${icon(name, 11)}${gap(2)}${fit(text, width)}</div>`).join('')}</div>
      <i style="flex:1"></i>${icon('status', 13)}<div class="div"></div>${icon('ok', 10)}${gap(3)}${fit('The project Unified_Youtube was saved...', 144)}${gap(60)}`;
  }
}
customElements.define('portal-bar', PortalBar);

class WinTaskbar extends TiaElement {
  css() {
    return `
      :host { display: flex; align-items: center; height: 20px; background: linear-gradient(90deg, #263d42, #23394a 50%, #1d2d47); color: #fff; }
      .win { display: flex; align-items: center; width: 101px; height: 20px; border-bottom: 2px solid #6fa9d8; padding: 1px 0 0 3px; }
      .active { background: #4c646c; }
    `;
  }

  html() {
    const win = (name, text, width, cls = '', w = 101) => `<div class="win ${cls}" style="width:${w}px">${icon(name, 11)}${gap(2)}${fit(text, width)}</div>`;
    return `
      ${gap(6)}${icon('win', 12)}${gap(12)}${icon('search', 12)}${gap(12)}${icon('cortana', 12)}${gap(12)}${icon('taskview', 12)}${gap(11)}
      ${win('winFolder', '17.0', 14)}${gap(5)}${win('winFolder', 'Captura', 28)}${gap(10)}
      ${icon('store', 11)}${gap(14)}${icon('winMail', 11)}${gap(13)}${icon('edge', 12)}${gap(13)}${icon('opera', 11)}${gap(14)}${icon('chrome', 11)}${gap(7)}
      ${win('logo', 'Siemens  -  C:\\Users\\...', 80, 'active', 107)}${gap(3)}${win('rec', 'Screen Recorder Pro', 71)}${gap(6)}${win('ucp', 'ucp-AC64179A602C:0', 76)}
      <i style="flex:1"></i>${icon('cloud', 15)}${gap(6)}${fit('50°F', 18)}${gap(6)}${fit('Cloudy', 28)}${gap(7)}${icon('chevUp', 9)}${gap(7)}${icon('cam', 10)}
      ${gap(5)}${icon('battery', 11)}${gap(6)}${icon('wifi', 10)}${gap(4)}${icon('sound', 11)}${gap(7)}${fit('ENG', 15)}${gap(9)}${fit('12:53 PM', 32)}${gap(12)}${icon('notify', 12)}${gap(17)}`;
  }
}
customElements.define('win-taskbar', WinTaskbar);

class TiaApp extends TiaElement {
  css() {
    return `
      :host { display: block; width: 1280px; height: 720px; }
      main { display: grid; grid-template-columns: 16px 156px 945px 146px 17px; height: 632px; background: #1c2233; }
      .center { display: flex; flex-direction: column; padding: 0 1px 0 3px; min-width: 0; }
      language-editor { margin-bottom: 2px; }
      tasks-panel { margin-left: 1px; }
      /* click marker of the screen recorder */
      .pointer { position: absolute; left: 158px; top: 260px; width: 23px; height: 23px; border-radius: 50%; background: #fcee21; }
    `;
  }

  html() {
    return `
      <title-bar></title-bar>
      <app-header></app-header>
      <main>
        <start-strip></start-strip>
        <project-tree></project-tree>
        <div class="center"><language-editor></language-editor><inspector-panel></inspector-panel></div>
        <tasks-panel></tasks-panel>
        <side-tabs></side-tabs>
      </main>
      <portal-bar></portal-bar>
      <win-taskbar></win-taskbar>
      <div class="pointer"></div>`;
  }
}
customElements.define('tia-app', TiaApp);
</script>
</body>
</html>
